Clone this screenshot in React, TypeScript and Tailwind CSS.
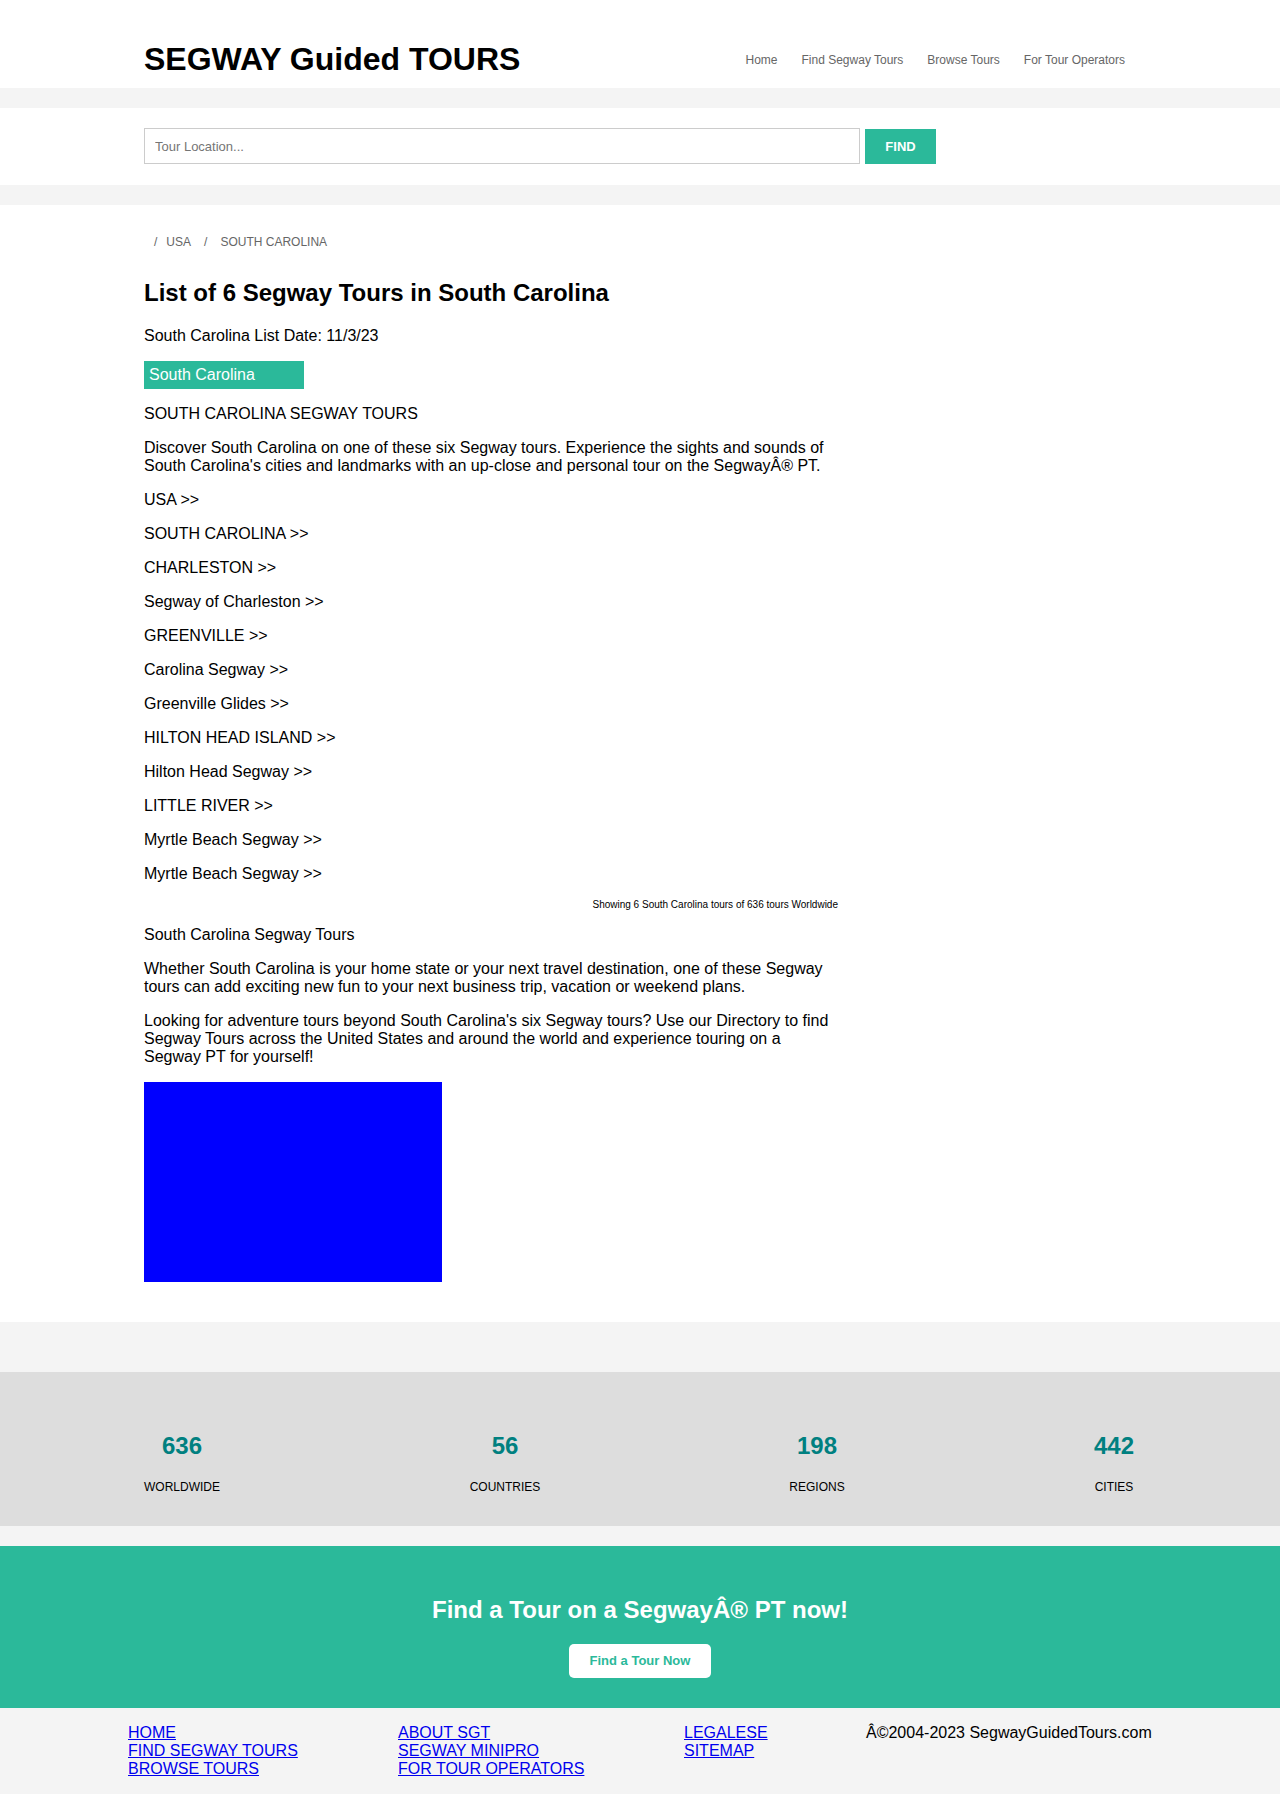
import React from 'react';

const tourLinks = [
  'USA >>',
  'SOUTH CAROLINA >>',
  'CHARLESTON >>',
  'Segway of Charleston >>',
  'GREENVILLE >>',
  'Carolina Segway >>',
  'Greenville Glides >>',
  'HILTON HEAD ISLAND >>',
  'Hilton Head Segway >>',
  'LITTLE RIVER >>',
  'Myrtle Beach Segway >>',
  'Myrtle Beach Segway >>',
];

const stats = [
  { value: '636', label: 'WORLDWIDE' },
  { value: '56', label: 'COUNTRIES' },
  { value: '198', label: 'REGIONS' },
  { value: '442', label: 'CITIES' },
];

const navItems = ['Home', 'Find Segway Tours', 'Browse Tours', 'For Tour Operators'];

export default function App() {
  return (
    <div className="min-h-[1794px] bg-white text-black font-['Liberation_Sans',Arial,sans-serif]">
      {/* header */}
      <header className="h-[88px] bg-white">
        <div className="w-[992px] mx-auto h-full flex items-end justify-between pb-[10px]">
          <h1 className="text-[32px] leading-[37px] font-bold">SEGWAY Guided TOURS</h1>
          <nav className="flex items-center mb-[11px] mr-[11px] text-[12px] leading-[14px] text-[#666]">
            {navItems.map((item, i) => (
              <a key={item} href="#" className={i === 0 ? '' : 'ml-6'}>
                {item}
              </a>
            ))}
          </nav>
        </div>
      </header>

      <div className="h-5 bg-[#f4f4f4]" />

      {/* search */}
      <section className="h-[77px] bg-white">
        <div className="w-[992px] mx-auto pt-5 flex items-start">
          <input
            type="text"
            placeholder="Tour Location..."
            className="w-[716px] h-9 border border-[#ccc] px-[10px] text-[13px] text-[#333] placeholder:text-[#757575] outline-none"
          />
          <button className="ml-[5px] mt-px w-[71px] h-[35px] bg-[#2bb99a] text-white text-[13px] font-bold">
            FIND
          </button>
        </div>
      </section>

      <div className="h-5 bg-[#f4f4f4]" />

      {/* main */}
      <main className="bg-white pt-[30px] pb-10">
        <div className="w-[992px] mx-auto">
          <div className="w-[694px]">
            <div className="flex text-[12px] leading-[14px] text-[#666] pl-[10px]">
              <span>/</span>
              <span className="ml-[9px]">USA</span>
              <span className="ml-[13px]">/</span>
              <span className="ml-[13px]">SOUTH CAROLINA</span>
            </div>

            <h2 className="mt-[30px] text-[24px] leading-[28px] font-bold">
              List of 6 Segway Tours in South Carolina
            </h2>

            <p className="mt-5 text-[16px] leading-[18px]">South Carolina List Date: 11/3/23</p>

            <div className="mt-4 w-40 h-7 bg-[#2bb99a] text-white text-[16px] leading-[18px] px-[5px] py-[5px]">
              South Carolina
            </div>

            <div className="mt-4 text-[16px] leading-[18px]">
              <p className="mb-4">SOUTH CAROLINA SEGWAY TOURS</p>
              <p className="mb-4">
                Discover South Carolina on one of these six Segway tours. Experience the sights and sounds of
                South Carolina's cities and landmarks with an up-close and personal tour on the SegwayÂ® PT.
              </p>
              {tourLinks.map((t, i) => (
                <p key={i} className="mb-4">
                  {t}
                </p>
              ))}
              <p className="text-right text-[10px] leading-[12px] mb-[15px]">
                Showing 6 South Carolina tours of 636 tours Worldwide
              </p>
              <p className="mb-4">South Carolina Segway Tours</p>
              <p className="mb-4">
                Whether South Carolina is your home state or your next travel destination, one of these Segway
                tours can add exciting new fun to your next business trip, vacation or weekend plans.
              </p>
              <p className="mb-4">
                Looking for adventure tours beyond South Carolina's six Segway tours? Use our Directory to find
                Segway Tours across the United States and around the world and experience touring on a Segway PT
                for yourself!
              </p>
            </div>

            <div className="w-[298px] h-[200px] bg-[#0000ff]" />
          </div>
        </div>
      </main>

      <div className="h-[50px] bg-[#f4f4f4]" />

      {/* stats */}
      <section className="h-[154px] bg-[#dddddd] pt-[60px]">
        <div className="grid grid-cols-[364px_282px_342px_252px]">
          {stats.map((s) => (
            <div key={s.label} className="flex flex-col items-center">
              <div className="text-[24px] leading-[28px] font-bold text-[#008080]">{s.value}</div>
              <div className="mt-5 text-[12px] leading-[14px]">{s.label}</div>
            </div>
          ))}
        </div>
      </section>

      <div className="h-5 bg-[#f4f4f4]" />

      {/* call to action */}
      <section className="h-[162px] bg-[#2bb99a] pt-[50px] flex flex-col items-center">
        <h3 className="text-[24px] leading-[28px] font-bold text-white">Find a Tour on a SegwayÂ® PT now!</h3>
        <a
          href="#"
          className="mt-5 w-[142px] h-[34px] rounded-[5px] bg-white flex items-center justify-center text-[13px] font-bold text-[#2bb99a]"
        >
          Find a Tour Now
        </a>
      </section>

      {/* footer */}
      <footer className="h-[86px] bg-[#f4f4f4] pt-4 text-[16px] leading-[18px]">
        <div className="grid grid-cols-[270px_286px_182px_auto] pl-[128px]">
          <div className="flex flex-col items-start">
            <a href="#" className="text-[#0000ee] underline">HOME</a>
            <a href="#" className="text-[#0000ee] underline">FIND SEGWAY TOURS</a>
            <a href="#" className="text-[#0000ee] underline">BROWSE TOURS</a>
          </div>
          <div className="flex flex-col items-start">
            <a href="#" className="text-[#0000ee] underline">ABOUT SGT</a>
            <a href="#" className="text-[#0000ee] underline">SEGWAY MINIPRO</a>
            <a href="#" className="text-[#0000ee] underline">FOR TOUR OPERATORS</a>
          </div>
          <div className="flex flex-col items-start">
            <a href="#" className="text-[#0000ee] underline">LEGALESE</a>
            <a href="#" className="text-[#0000ee] underline">SITEMAP</a>
          </div>
          <div>Â©2004-2023 SegwayGuidedTours.com</div>
        </div>
      </footer>
    </div>
  );
}
